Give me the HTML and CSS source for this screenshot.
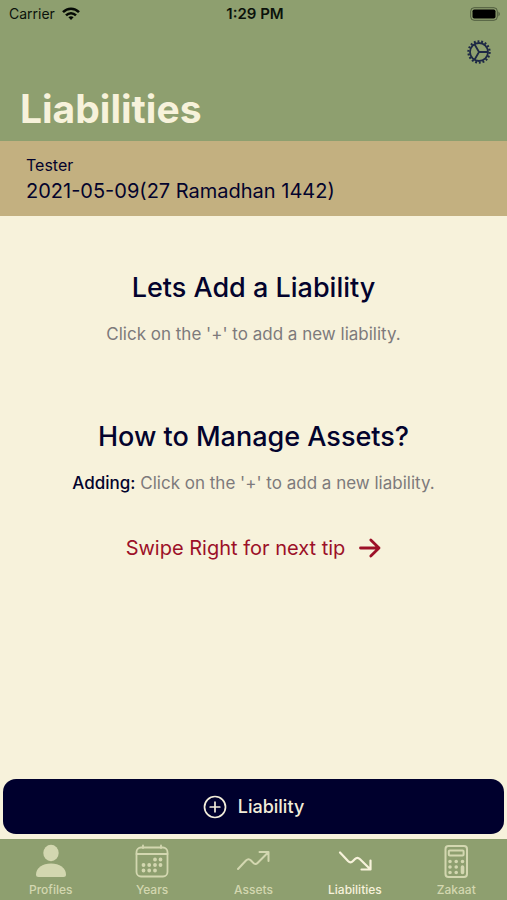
FILE: index.html
```html
<!DOCTYPE html>
<html lang="en">
<head>
<meta charset="utf-8">
<meta name="viewport" content="width=device-width, initial-scale=1">
<title>Liabilities</title>
<link rel="stylesheet" href="styles.css">
</head>
<body>
<header class="header">
  <div class="status">
    <div class="carrier">
      <span>Carrier</span>
      <svg width="18" height="14" viewBox="0 0 18 14" fill="none" stroke="#050a05" stroke-width="2.5" aria-hidden="true">
        <path d="M1 5.2C5.5.5 12.5.5 17 5.2"/>
        <path d="M4 8.3C6.9 5.4 11.1 5.4 14 8.3"/>
        <path d="M6.400 10.300Q9 8.100 11.600 10.300L9 13Z" fill="#050a05" stroke="none"/>
      </svg>
    </div>
    <span class="time">1:29 PM</span>
    <svg class="battery" width="31" height="14" viewBox="0 0 31 14" aria-hidden="true">
      <rect x=".7" y=".7" width="26.600" height="12.600" rx="3.500" fill="none" stroke="#050a05" stroke-opacity=".45"/>
      <rect x="2.500" y="2.500" width="23" height="9" rx="1.800" fill="#000"/>
      <path d="M28.500 4.500Q31 7 28.500 9.500Z" fill="#050a05" fill-opacity=".5"/>
    </svg>
  </div>
  <div class="toolbar">
    <button class="settings" type="button" aria-label="Settings">
      <svg width="24" height="24" viewBox="0 0 24 24" fill="none" stroke="#1d2845" aria-hidden="true">
        <circle cx="12" cy="12" r="10.600" stroke-width="2.200" stroke-dasharray="1.900 1.800"/>
        <circle cx="12" cy="12" r="9" stroke-width="1.800"/>
        <path d="M12 12H21M12 12L7.500 4.200M12 12L7.500 19.800" stroke-width="1.800"/>
      </svg>
    </button>
  </div>
  <h1>Liabilities</h1>
</header>
<section class="profile">
  <p class="name">Tester</p>
  <p class="date">2021-05-09(27 Ramadhan 1442)</p>
</section>
<main class="content">
  <section class="tip">
    <h2>Lets Add a Liability</h2>
    <p>Click on the '+' to add a new liability.</p>
  </section>
  <section class="tip">
    <h2>How to Manage Assets?</h2>
    <p><strong>Adding:</strong> Click on the '+' to add a new liability.</p>
  </section>
  <p class="swipe">
    <span>Swipe Right for next tip</span>
    <svg width="22" height="20" viewBox="0 0 22 20" fill="none" stroke="#9c1028" stroke-width="2.800" stroke-linecap="round" stroke-linejoin="round" aria-hidden="true"><path d="M1.500 10H20M11.800 2L20 10L11.800 18"/></svg>
  </p>
</main>
<div class="action">
  <button class="add" type="button">
    <svg width="24" height="24" viewBox="0 0 24 24" fill="none" stroke="#f2edda" stroke-width="1.700" stroke-linecap="round" aria-hidden="true"><circle cx="12" cy="12" r="10.500"/><path d="M12 7.200V16.800M7.200 12H16.800"/></svg>
    <span>Liability</span>
  </button>
</div>
<nav class="tabs">
  <a href="#profiles">
    <svg width="34" height="34" viewBox="0 0 34 34" fill="currentColor" aria-hidden="true"><ellipse cx="17" cy="9" rx="7.700" ry="8.300"/><path d="M2 30.500C2 24 8.500 19.500 17 19.500S32 24 32 30.500Q32 33 29.500 33H4.500Q2 33 2 30.500Z"/></svg>
    <span>Profiles</span>
  </a>
  <a href="#years">
    <svg width="34" height="34" viewBox="0 0 34 34" fill="none" stroke="currentColor" stroke-width="1.800" stroke-linecap="round" aria-hidden="true"><rect x="1.500" y="3.500" width="31" height="29" rx="4.500"/><path d="M1.500 10H32.500M8 1.500V4M26 1.500V4"/><path d="M20 15.500H20.010M25.500 15.500H25.510M8.500 21H8.510M14.200 21H14.210M20 21H20.010M25.500 21H25.510M8.500 26.500H8.510M14.200 26.500H14.210M20 26.500H20.010" stroke-width="3.800"/></svg>
    <span>Years</span>
  </a>
  <a href="#assets">
    <svg width="34" height="34" viewBox="0 0 34 34" fill="none" stroke="currentColor" stroke-width="2" stroke-linecap="round" stroke-linejoin="round" aria-hidden="true"><path d="M2 25L10 16.500Q12.500 14 15 16.500L17 18.700Q19.300 21.200 21.800 18.700L32 8.500M23.500 8H32.500V17"/></svg>
    <span>Assets</span>
  </a>
  <a href="#liabilities" class="current" aria-current="page">
    <svg width="34" height="34" viewBox="0 0 34 34" fill="none" stroke="currentColor" stroke-width="2.200" stroke-linecap="round" stroke-linejoin="round" aria-hidden="true"><path d="M2 8.500L10 17Q12.500 19.500 15 17L17 15Q19.300 12.600 21.800 15L32 25M23.500 25.500H32.500V16.500"/></svg>
    <span>Liabilities</span>
  </a>
  <a href="#zakaat">
    <svg width="34" height="34" viewBox="0 0 34 34" fill="none" stroke="currentColor" stroke-width="2" stroke-linecap="round" aria-hidden="true"><rect x="6.500" y="2" width="21.500" height="31" rx="3"/><rect x="9.800" y="6.500" width="14.800" height="5" rx="1"/><path d="M11 17.500H11.010M17.200 17.500H17.210M23.500 17.500H23.510M11 23H11.010M17.200 23H17.210M11 28.500H11.010M17.200 28.500H17.210M23.500 23V28.500" stroke-width="3.600"/></svg>
    <span>Zakaat</span>
  </a>
</nav>
</body>
</html>
```
FILE: styles.css
```css
* { box-sizing: border-box; }

body {
  margin: 0;
  min-height: 100vh;
  display: flex;
  flex-direction: column;
  background: #f7f2db;
  color: #03032d;
  font-family: Inter, "Liberation Sans", sans-serif;
}

h1, h2, p { margin: 0; }

svg { display: block; flex: none; }

button { border: 0; font: inherit; }

.header {
  background: #8e9f6f;
  padding-bottom: 8px;
}

.status {
  display: grid;
  grid-template-columns: 1fr auto 1fr;
  align-items: center;
  height: 27px;
  padding: 0 6px 0 9px;
  color: #0b120b;
  font-size: 14px;
}

.carrier {
  display: flex;
  align-items: center;
  gap: 7px;
}

.time {
  font-size: 15px;
  font-weight: 600;
}

.battery { justify-self: end; }

.toolbar {
  display: flex;
  justify-content: flex-end;
  padding: 13px 16px 0;
}

.settings {
  padding: 0;
  background: none;
}

h1 {
  padding: 20px 20px 0;
  color: #f7f2db;
  font-size: 39px;
  line-height: 49px;
  font-weight: 700;
}

.profile {
  background: #c3b080;
  padding: 12px 26px 11px;
}

.name {
  font-size: 16px;
  line-height: 24px;
}

.date {
  font-size: 20px;
  line-height: 28px;
}

.content {
  flex: 1;
  padding: 52px 20px 0;
  text-align: center;
}

.tip { margin-bottom: 72px; }

.tip h2 {
  margin-bottom: 16px;
  font-size: 27px;
  line-height: 40px;
  font-weight: 500;
}

.tip p {
  color: #7d7a7b;
  font-size: 17px;
  line-height: 21px;
}

.tip strong {
  color: #03032d;
  font-weight: 500;
}

.tip + .tip { margin-bottom: 40px; }

.swipe {
  display: flex;
  align-items: center;
  justify-content: center;
  gap: 14px;
  color: #9c1028;
  font-size: 20px;
  line-height: 28px;
}

.action { padding: 0 3px 5px; }

.add {
  display: flex;
  align-items: center;
  justify-content: center;
  gap: 11px;
  width: 100%;
  height: 55px;
  border-radius: 13px;
  background: #00002d;
  color: #f2edda;
  font-size: 18px;
  font-weight: 500;
}

.tabs {
  display: grid;
  grid-template-columns: repeat(5, 1fr);
  background: #8e9f6f;
  padding: 5px 0 2px;
}

.tabs a {
  display: flex;
  flex-direction: column;
  align-items: center;
  gap: 4px;
  color: #d3d7b0;
  font-size: 12px;
  line-height: 16px;
  font-weight: 500;
  text-decoration: none;
}

.tabs .current { color: #f7f2db; }
```
